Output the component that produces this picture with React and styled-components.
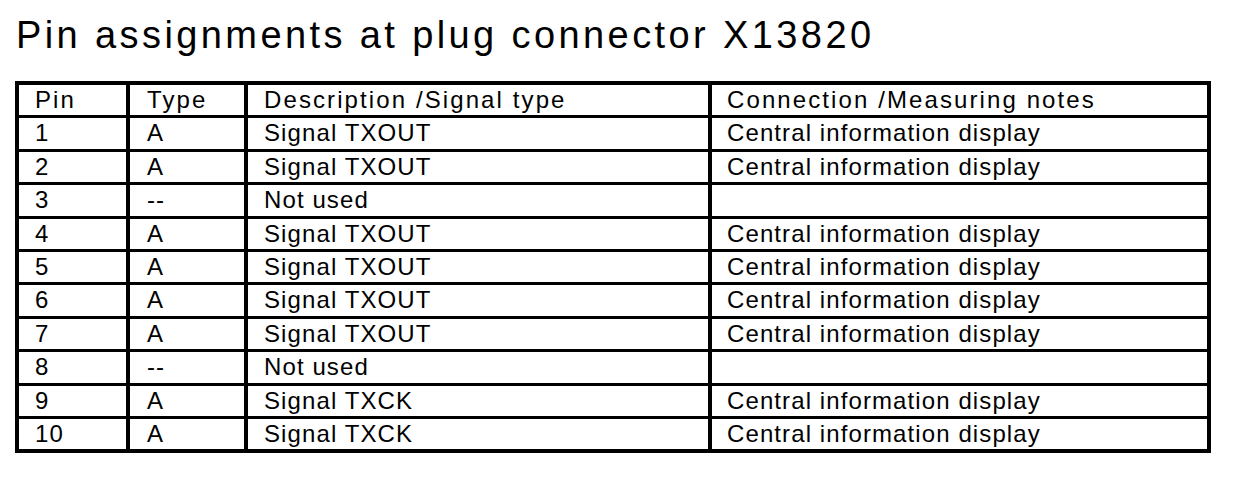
import React from 'react';
import styled, { createGlobalStyle } from 'styled-components';

const GlobalStyle = createGlobalStyle`
  body {
    margin: 0;
    background: #ffffff;
    font-family: "Liberation Sans", Arial, sans-serif;
    color: #000;
  }
`;

const Page = styled.div`
  width: 1248px;
  height: 478px;
  padding: 16px 0 0 15px;
  box-sizing: border-box;
  background: #fff;
`;

const Title = styled.h1`
  margin: 0 0 27px 1px;
  font-size: 38px;
  line-height: 38px;
  font-weight: normal;
  letter-spacing: 3.4px;
  white-space: nowrap;
`;

const Table = styled.div`
  display: grid;
  grid-template-columns: 107px 114px 460px 495px;
  grid-auto-rows: 30.4px;
  column-gap: 4px;
  row-gap: 3px;
  padding: 4px;
  width: 1196px;
  box-sizing: border-box;
  background: #000;
`;

const Cell = styled.div`
  background: #fff;
  padding-left: ${p => p.$pad || 16}px;
  font-size: 24px;
  line-height: 29px;
  letter-spacing: ${p => (p.$head ? 2.1 : 1.1)}px;
  white-space: nowrap;
  overflow: hidden;
`;

const headers = ['Pin', 'Type', 'Description /Signal type', 'Connection /Measuring notes'];

const rows = [
  ['1', 'A', 'Signal TXOUT', 'Central information display'],
  ['2', 'A', 'Signal TXOUT', 'Central information display'],
  ['3', '--', 'Not used', ''],
  ['4', 'A', 'Signal TXOUT', 'Central information display'],
  ['5', 'A', 'Signal TXOUT', 'Central information display'],
  ['6', 'A', 'Signal TXOUT', 'Central information display'],
  ['7', 'A', 'Signal TXOUT', 'Central information display'],
  ['8', '--', 'Not used', ''],
  ['9', 'A', 'Signal TXCK', 'Central information display'],
  ['10', 'A', 'Signal TXCK', 'Central information display'],
];

const pads = [16, 17, 16, 15];

function App() {
  return (
    <Page>
      <GlobalStyle />
      <Title>Pin assignments at plug connector X13820</Title>
      <Table>
        {headers.map((h, i) => (
          <Cell key={'h' + i} $head $pad={pads[i]}>{h}</Cell>
        ))}
        {rows.map((r, ri) =>
          r.map((c, ci) => (
            <Cell key={ri + '-' + ci} $pad={pads[ci]}>{c}</Cell>
          ))
        )}
      </Table>
    </Page>
  );
}

export default App;
